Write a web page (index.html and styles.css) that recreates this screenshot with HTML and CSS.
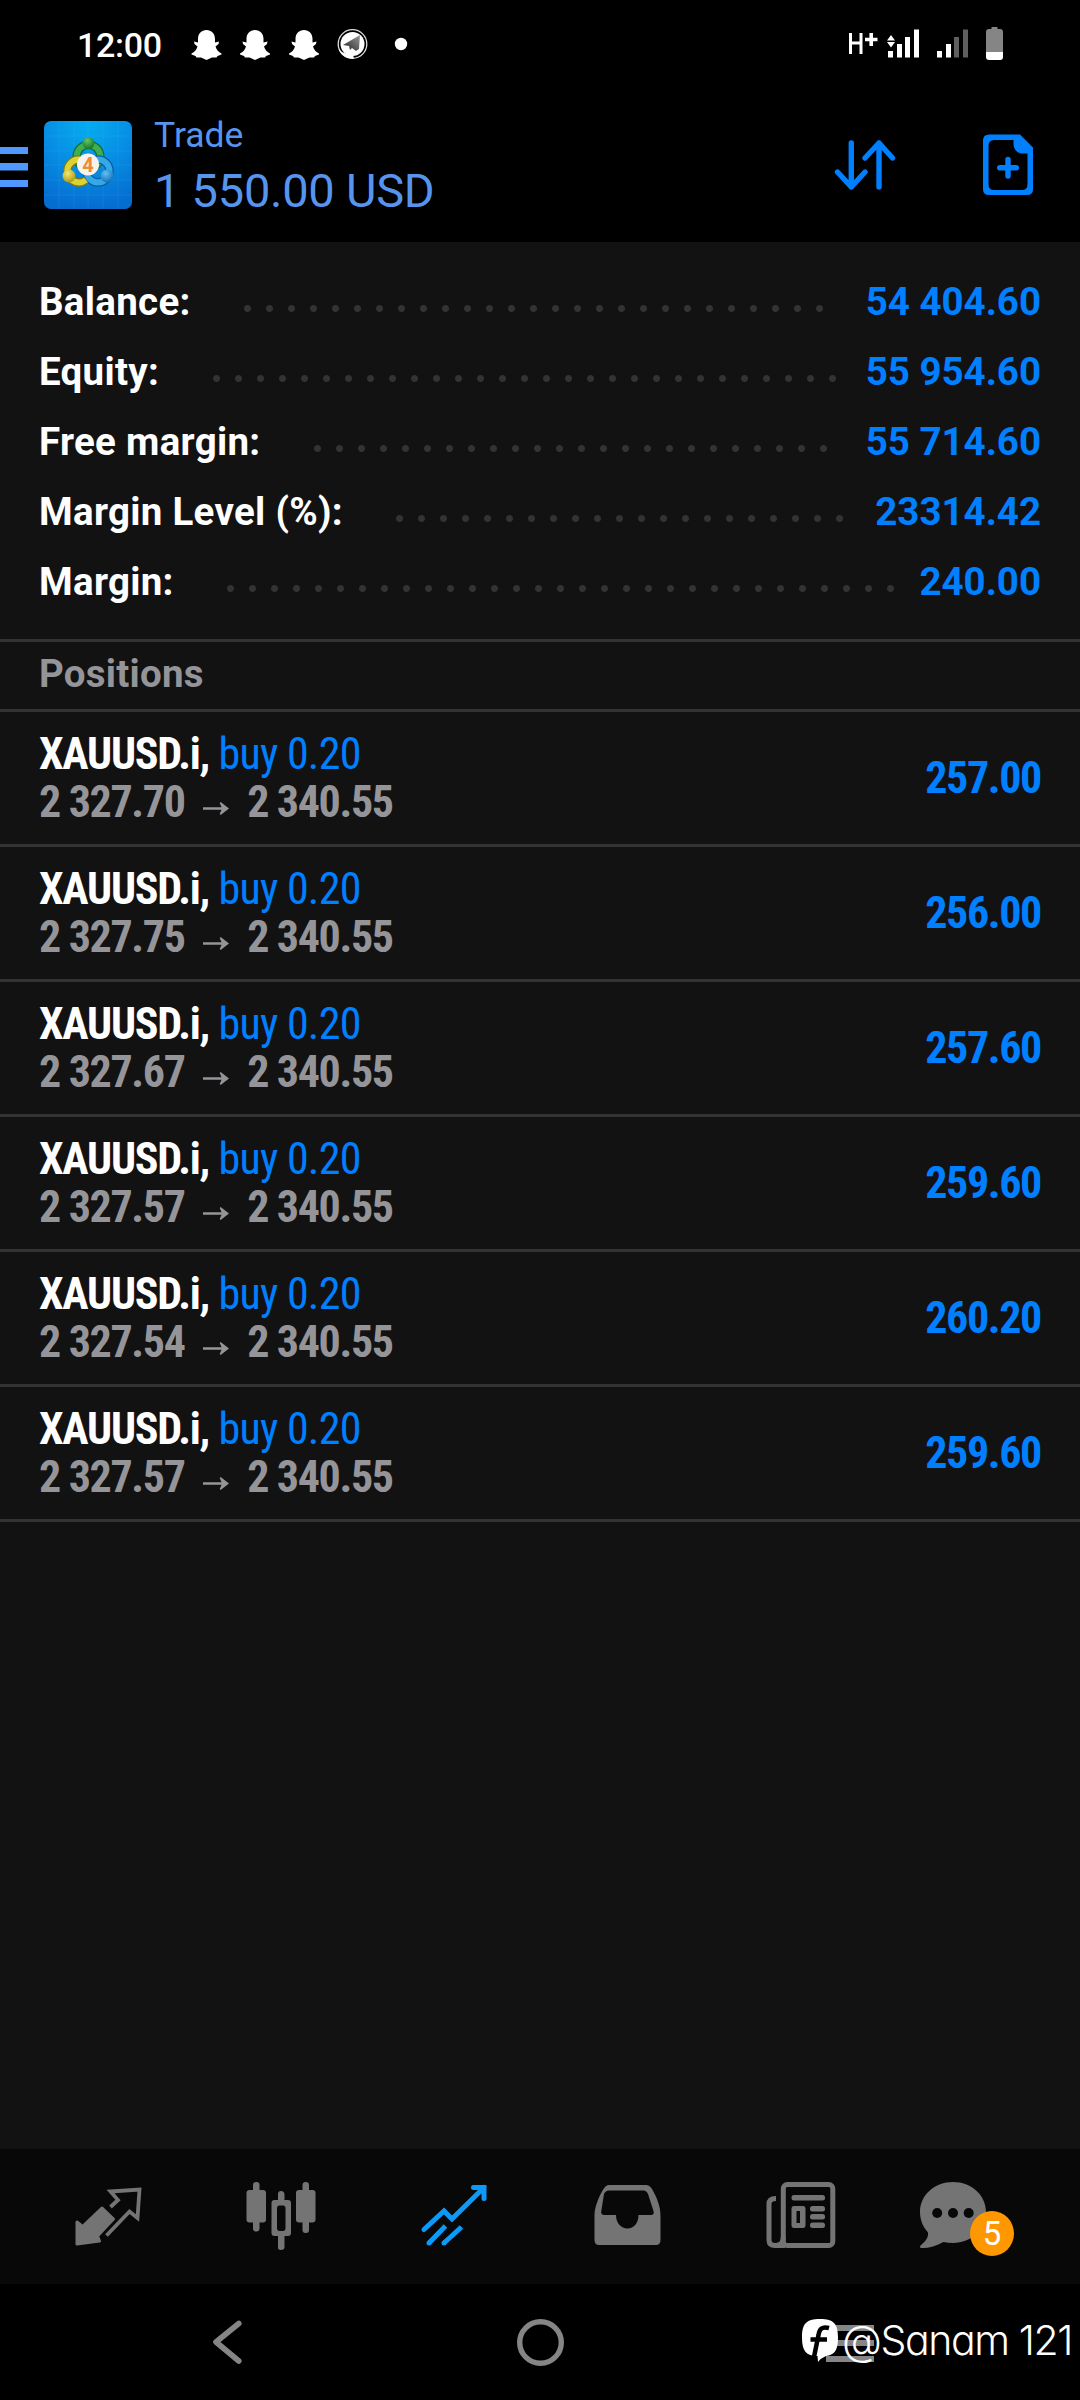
FILE: index.html
```html
<!DOCTYPE html>
<html lang="en">
<head>
<meta charset="utf-8">
<title>Trade</title>
<link rel="stylesheet" href="styles.css">
</head>
<body>
<div class="screen">
  <header class="status">
    <span class="clock">12:00</span>
    <svg class="notices" width="220" height="34" viewBox="190 28 220 34">
      <defs>
        <path id="ghost" fill="#fff" d="M15 0C20 0 23.500 3.500 23.500 9V12.500L27.500 11.500L27 14L24 16.500C25 20 27 22 30 23.500V24.500L26 26L25 27.500L20.500 27.500L15 30L9.500 27.500L5 27.500L4 26L0 24.500V23.500C3 22 5 20 6 16.500L3 14L2.500 11.500L6.500 12.500V9C6.500 3.500 10 0 15 0Z"/>
        <linearGradient id="plane" x1="0" y1="1" x2="1" y2="0"><stop offset="0" stop-color="#222"/><stop offset="1" stop-color="#999"/></linearGradient>
      </defs>
      <use href="#ghost" x="191.500" y="30"/>
      <use href="#ghost" x="240" y="30"/>
      <use href="#ghost" x="289" y="30"/>
      <circle cx="352.500" cy="44" r="14.300" fill="none" stroke="#ddd" stroke-width="1.300"/>
      <circle cx="352.500" cy="44" r="12" fill="#fff"/>
      <path fill="#fff" d="M339 49L342 52L347 54L353 55L354 58.500C347 59.500 340 55 339 49Z"/>
      <path fill="url(#plane)" d="M343 45L360 35L359 49L356 51L352 48L350 50L349 46Z"/>
      <circle cx="401" cy="44" r="6.200" fill="#fff"/>
    </svg>
    <svg class="signals" width="158" height="36" viewBox="846 26 158 36">
      <path fill="none" stroke="#fff" stroke-width="3" d="M850.500 33V54M861 33V54M850.500 43H861"/>
      <path fill="none" stroke="#fff" stroke-width="3.600" d="M865 39.500H877.500M871.200 33V46"/>
      <path fill="#fff" d="M887 40.500L891 35L895 40.500ZM887 42L891 47.500L895 42ZM888 51H893V57.500H888ZM897 44H902V57.500H897ZM905 37H910V57.500H905ZM914 29.500H919V57.500H914ZM937 51H942V57.500H937ZM946 44H951V57.500H946Z"/>
      <path fill="#5f5f5f" d="M954 37H959V57.500H954ZM963 29.500H968V57.500H963Z"/>
      <path fill="#858585" d="M986 53V32Q986 29 989 29H991.500V27H997.500V29H1000Q1003 29 1003 32V53Z"/>
      <path fill="#fff" d="M986 52H1003V57Q1003 60 1000 60H989Q986 60 986 57Z"/>
    </svg>
  </header>

  <header class="appbar">
    <svg class="menu" width="28" height="42" viewBox="0 0 28 42"><path fill="#4f98ff" d="M0 1H28V8H0ZM0 17H28V24.500H0ZM0 34H28V41H0Z"/></svg>
    <svg class="logo" width="88" height="88" viewBox="0 0 88 88">
      <defs>
        <radialGradient id="sky" cx=".5" cy="0" r="1"><stop offset="0" stop-color="#05aef0"/><stop offset=".5" stop-color="#078ee4"/><stop offset="1" stop-color="#066dd0"/></radialGradient>
        <radialGradient id="gr" cx=".4" cy=".3" r=".8"><stop offset="0" stop-color="#63c765"/><stop offset="1" stop-color="#0d6b22"/></radialGradient>
        <radialGradient id="ye" cx=".4" cy=".3" r=".8"><stop offset="0" stop-color="#f6e870"/><stop offset="1" stop-color="#a09009"/></radialGradient>
        <radialGradient id="bl" cx=".4" cy=".3" r=".8"><stop offset="0" stop-color="#62c0f2"/><stop offset="1" stop-color="#0868b2"/></radialGradient>
      </defs>
      <rect width="88" height="88" rx="7" fill="url(#sky)"/>
      <path stroke="#5cc8ff" stroke-opacity=".12" fill="none" d="M15 0V88M30 0V88M44 0V88M59 0V88M74 0V88M0 15H88M0 30H88M0 44H88M0 59H88M0 74H88"/>
      <g fill="none">
        <circle cx="44.500" cy="35.500" r="11.800" stroke="#0b6a35" stroke-width="8.500"/>
        <circle cx="44.500" cy="35.500" r="11.800" stroke="#3fae50" stroke-width="6"/>
        <circle cx="54" cy="50" r="11.500" stroke="#075f9f" stroke-width="8.500"/>
        <circle cx="54" cy="50" r="11.500" stroke="#35a9e8" stroke-width="6"/>
        <path stroke="#7b7a15" stroke-width="8.500" d="M36 38.500A11.500 11.500 0 1 0 42 59"/>
        <path stroke="#ddd233" stroke-width="6" d="M36 38.500A11.500 11.500 0 1 0 42 59"/>
      </g>
      <circle cx="44.500" cy="22" r="6" fill="url(#gr)"/>
      <circle cx="25" cy="55" r="6.500" fill="url(#ye)"/>
      <circle cx="63" cy="55" r="6.500" fill="url(#bl)"/>
      <circle cx="44" cy="43.500" r="11" fill="#f6f3ef"/>
      <text x="44" y="50.500" text-anchor="middle" class="four">4</text>
    </svg>
    <div class="titles">
      <div class="title">Trade</div>
      <div class="total">1 550.00 USD</div>
    </div>
    <svg class="sort" width="62" height="54" viewBox="834 138 62 54"><path fill="none" stroke="#007fff" stroke-width="5.400" stroke-linecap="round" stroke-linejoin="round" d="M851.300 143V187M837.500 172L851.300 187L865 172M879 187V143M865 158L879 143L892.500 158"/></svg>
    <svg class="neworder" width="52" height="64" viewBox="982 133 52 64">
      <path fill="#007fff" fill-rule="evenodd" d="M989 134.500H1020L1033 147.500V189Q1033 195 1027 195H989Q983 195 983 189V140.500Q983 134.500 989 134.500ZM994 140Q988.500 140 988.500 146V184Q988.500 190 994 190H1022Q1027.500 190 1027.500 184V153.500H1023C1017 153.500 1013.500 149 1013.500 144V140Z"/>
      <path fill="none" stroke="#007fff" stroke-width="5.400" stroke-linecap="round" d="M1008 159.500V176M999.700 167.700H1016.300"/>
    </svg>
  </header>

  <main class="content">
    <section class="summary">
      <div class="line"><span class="label">Balance:</span><i class="leader"></i><span class="amount">54 404.60</span></div>
      <div class="line"><span class="label">Equity:</span><i class="leader"></i><span class="amount">55 954.60</span></div>
      <div class="line"><span class="label">Free margin:</span><i class="leader"></i><span class="amount">55 714.60</span></div>
      <div class="line"><span class="label">Margin Level (%):</span><i class="leader"></i><span class="amount">23314.42</span></div>
      <div class="line"><span class="label">Margin:</span><i class="leader"></i><span class="amount">240.00</span></div>
    </section>
    <h2 class="heading">Positions</h2>
    <section class="positions">
      <article class="position"><div class="deal"><div class="symbol"><b>XAUUSD.i,</b> buy 0.20</div><div class="prices">2 327.70 <svg class="arrow" viewBox="0 0 28 14"><path d="M0 5.600H20L18 1L19 0L28 7L19 14L18 13L20 8.400H0Z"/></svg> 2 340.55</div></div><div class="profit">257.00</div></article>
      <article class="position"><div class="deal"><div class="symbol"><b>XAUUSD.i,</b> buy 0.20</div><div class="prices">2 327.75 <svg class="arrow" viewBox="0 0 28 14"><path d="M0 5.600H20L18 1L19 0L28 7L19 14L18 13L20 8.400H0Z"/></svg> 2 340.55</div></div><div class="profit">256.00</div></article>
      <article class="position"><div class="deal"><div class="symbol"><b>XAUUSD.i,</b> buy 0.20</div><div class="prices">2 327.67 <svg class="arrow" viewBox="0 0 28 14"><path d="M0 5.600H20L18 1L19 0L28 7L19 14L18 13L20 8.400H0Z"/></svg> 2 340.55</div></div><div class="profit">257.60</div></article>
      <article class="position"><div class="deal"><div class="symbol"><b>XAUUSD.i,</b> buy 0.20</div><div class="prices">2 327.57 <svg class="arrow" viewBox="0 0 28 14"><path d="M0 5.600H20L18 1L19 0L28 7L19 14L18 13L20 8.400H0Z"/></svg> 2 340.55</div></div><div class="profit">259.60</div></article>
      <article class="position"><div class="deal"><div class="symbol"><b>XAUUSD.i,</b> buy 0.20</div><div class="prices">2 327.54 <svg class="arrow" viewBox="0 0 28 14"><path d="M0 5.600H20L18 1L19 0L28 7L19 14L18 13L20 8.400H0Z"/></svg> 2 340.55</div></div><div class="profit">260.20</div></article>
      <article class="position"><div class="deal"><div class="symbol"><b>XAUUSD.i,</b> buy 0.20</div><div class="prices">2 327.57 <svg class="arrow" viewBox="0 0 28 14"><path d="M0 5.600H20L18 1L19 0L28 7L19 14L18 13L20 8.400H0Z"/></svg> 2 340.55</div></div><div class="profit">259.60</div></article>
    </section>
  </main>

  <nav class="tabs">
    <svg class="tab" viewBox="21 2149 173 135">
      <path fill="#747474" stroke="#747474" stroke-width="3" stroke-linejoin="round" d="M102 2208L113.500 2219L97.500 2236L99.500 2241L77 2244V2222L82.500 2226.500Z"/>
      <path fill="none" stroke="#747474" stroke-width="3.800" d="M110.500 2207L118 2200L110.500 2191.500L139.500 2189.500L137.500 2218L129.500 2211.500L106.500 2235.500"/>
    </svg>
    <svg class="tab" viewBox="194 2149 173 135">
      <g fill="#747474"><rect x="246.500" y="2190" width="19.500" height="32.500" rx="3"/><rect x="253" y="2182" width="6.500" height="49.500" rx="3"/>
      <rect x="296" y="2190" width="19.500" height="32.500" rx="3"/><rect x="302.500" y="2182" width="6.500" height="51" rx="3"/>
      <path fill-rule="evenodd" d="M278 2201V2194Q278 2191 281 2191T284.500 2194V2200H288Q291 2200 291 2203V2233Q291 2236 288 2236H284.500V2247Q284.500 2250 281 2250T278 2247V2236H274.500Q271.500 2236 271.500 2233V2203Q271.500 2200 274.500 2200H278ZM279.500 2205.500Q277 2205.500 277 2208.500V2228Q277 2231 279.500 2231H283Q285.500 2231 285.500 2228V2208.500Q285.500 2205.500 283 2205.500Z"/></g>
    </svg>
    <svg class="tab" viewBox="367 2149 173 135">
      <path fill="none" stroke="#0d99f8" stroke-width="5" stroke-linecap="round" d="M424 2229.500L444 2211L452 2219L484 2187.500M473.500 2187.500H484V2198.500"/>
      <path fill="none" stroke="#0d99f8" stroke-width="5" d="M429 2243L445.500 2226M444 2243L461.500 2227"/>
      <g fill="#0d99f8"><circle cx="429" cy="2243" r="2.500"/><circle cx="444" cy="2243" r="2.500"/></g>
    </svg>
    <svg class="tab" viewBox="540 2149 173 135">
      <path fill="#747474" fill-rule="evenodd" d="M609 2185H646Q649.500 2185 652 2189C657 2198 660.500 2206 660.500 2216V2240Q660.500 2245 656 2245H599Q594.500 2245 594.500 2240V2214C595 2206 599 2196 603.500 2189Q606 2185 609 2185ZM609 2190.500Q605.500 2190.500 604 2194L601.300 2211Q600.500 2215 604.500 2215H616C616 2223 621 2228.500 627.500 2228.500S638.500 2223 638.500 2215H651Q654.500 2215 653.500 2211L648 2194Q646.500 2190.500 643.500 2190.500Z"/>
    </svg>
    <svg class="tab" viewBox="713 2149 173 135">
      <g fill="none" stroke="#747474" stroke-width="5"><rect x="783.300" y="2184.500" width="49.500" height="61" rx="4"/><path d="M776 2198.500Q769 2198.500 769 2204V2240Q769 2245.500 775 2245.500H785M783.300 2237Q783.300 2245 777 2245"/></g>
      <g fill="#747474"><rect x="791.500" y="2195" width="33.500" height="5.500" rx="2.500"/><rect x="810" y="2206" width="15" height="5.500" rx="2.500"/><rect x="810" y="2214" width="15" height="5.500" rx="2.500"/><rect x="810" y="2222.500" width="15" height="5.500" rx="2.500"/><path fill-rule="evenodd" d="M794 2206H803Q805.500 2206 805.500 2209V2225Q805.500 2228 803 2228H794Q791.500 2228 791.500 2225V2209Q791.500 2206 794 2206ZM796.500 2211V2223H800V2211Z"/></g>
    </svg>
    <div class="tab chat">
      <svg width="173" height="135" viewBox="886 2149 173 135">
        <path fill="#747474" d="M953 2182C971.500 2182 986 2195 986 2212S971.500 2243 953 2243Q948 2243 943.500 2242C936 2246 928 2248.500 921 2248Q919 2247 921 2245C926 2241 928.500 2237 928 2232.500C923 2227 920 2220 920 2212C920 2195 934.500 2182 953 2182Z"/>
        <g fill="#080808"><circle cx="937.200" cy="2213" r="5"/><circle cx="953" cy="2213" r="5"/><circle cx="968.700" cy="2213" r="5"/></g>
      </svg>
      <span class="badge">5</span>
    </div>
  </nav>

  <footer class="keys">
    <svg class="key" viewBox="170 2284 116 116"><path fill="none" stroke="#858585" stroke-width="5.600" stroke-linecap="round" stroke-linejoin="round" d="M238.800 2323.500L216 2342L238.800 2361"/></svg>
    <svg class="key" viewBox="482 2284 116 116"><circle cx="540.500" cy="2342.500" r="20.800" fill="none" stroke="#858585" stroke-width="5.400"/></svg>
    <svg class="key" viewBox="794 2284 116 116"><path fill="#858585" d="M826 2325H874V2331H826ZM826 2340H874V2346H826ZM826 2356H874V2362H826Z"/></svg>
    <div class="mark">
      <svg width="38" height="44" viewBox="801 2321 38 44">
        <path fill="#fff" d="M820 2322C834 2322 838 2327 838 2340.500S834 2358 826 2359Q821 2361 818 2365L817.500 2359C806 2359 802 2354 802 2340.500S806 2322 820 2322Z"/>
        <path fill="none" stroke="#000" stroke-width="4.500" d="M829 2331C822 2329 819.500 2332 818.500 2338L814 2360M810.500 2342.500H827"/>
      </svg>
      <span>@Sanam 121</span>
    </div>
  </footer>
</div>
</body>
</html>
```
FILE: styles.css
```css
* { box-sizing: border-box; }
body { margin: 0; background: #000; font-family: Roboto, sans-serif; }
svg { display: block; flex: none; }
.screen { width: 1080px; height: 2400px; display: flex; flex-direction: column; overflow: hidden; }

.status { height: 90px; flex: none; display: flex; align-items: flex-start; padding-left: 77px; color: #fff; }
.clock { width: 113px; padding-top: 24px; font-size: 34px; letter-spacing: -.3px; line-height: 42px; font-weight: 500; }
.notices { margin-top: 28px; }
.signals { margin: 26px 76px 0 auto; }

.appbar { height: 152px; flex: none; display: flex; align-items: flex-start; color: #5695ee; }
.menu { margin-top: 56px; }
.logo { margin: 31px 0 0 16px; }
.four { font: 700 20px Roboto, sans-serif; fill: #f18a32; }
.titles { padding: 23px 0 0 22px; }
.title { font-size: 35.500px; line-height: 44px; }
.total { margin-top: 4px; font-size: 47px; line-height: 60px; letter-spacing: -.25px; white-space: nowrap; }
.sort { margin: 48px 0 0 auto; }
.neworder { margin: 43px 46px 0 86px; }

.content { flex: 1; background: #121212; }
.summary { height: 397px; padding: 25px 39px 0; }
.line { height: 70px; display: flex; line-height: 70px; font-size: 38.500px; font-weight: 700; color: #fff; white-space: pre; }
.label { letter-spacing: .3px; }
.amount { color: #007fff; }
.leader { flex: 1; margin: 38px 10px 0 53.500px; }
/* only whole 22px steps, so the last dot is never cut */
.leader::before { content: ""; display: block; width: round(down, 100%, 22px); height: 7px; background: radial-gradient(circle at 3.500px 3.500px, #333 3px, transparent 3.900px) 0 0 / 22px 7px repeat-x; }
.heading { margin: 0; height: 73px; padding-left: 39px; border: solid #333; border-width: 3px 0; font-size: 38.500px; letter-spacing: .25px; line-height: 64px; font-weight: 700; color: #959599; }
.position { height: 135px; padding: 0 39px; display: flex; justify-content: space-between; border-bottom: 3px solid #333; font-size: 44px; font-stretch: 75%; letter-spacing: -1.350px; white-space: nowrap; }
.deal { padding-top: 18px; line-height: 48px; }
.symbol { color: #007fff; letter-spacing: -.75px; }
.symbol b { color: #fff; font-weight: 700; letter-spacing: -1.250px; }
.prices { color: #959599; font-weight: 700; }
.arrow { display: inline-block; width: 28px; height: 13px; margin: 0 8px 2px 9px; fill: #959599; }
.profit { line-height: 132px; font-weight: 700; color: #007fff; }

.tabs { height: 135px; flex: none; padding: 0 21px; display: grid; grid-template-columns: repeat(6, 173px); background: #080808; }
.tab { width: 173px; height: 135px; }
.chat { position: relative; }
.badge { position: absolute; left: 84px; top: 62px; width: 44px; height: 45px; border-radius: 50%; background: #ff9800; color: #fff; font-size: 33px; line-height: 46px; text-align: center; }

.keys { position: relative; height: 116px; flex: none; display: flex; justify-content: space-between; padding: 0 170px; background: #000; }
.key { width: 116px; height: 116px; }
.mark { position: absolute; left: 801px; top: 32px; display: flex; gap: 3px; align-items: center; color: #fff; font: 300 41px/48px Inter, sans-serif; font-feature-settings: "cv11"; letter-spacing: -1.400px; white-space: nowrap; }
```
